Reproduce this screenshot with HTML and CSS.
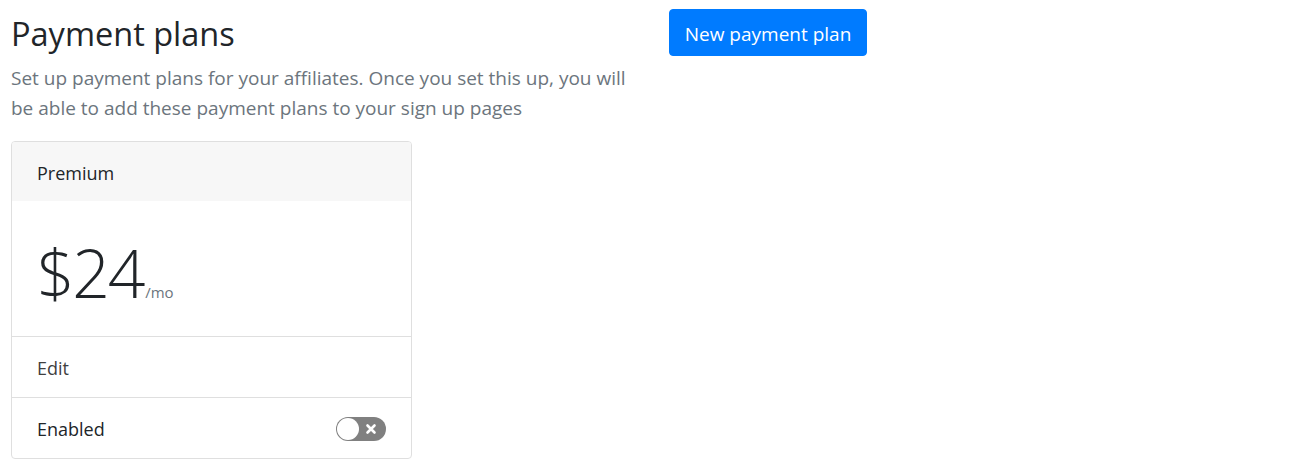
FILE: index.html
```html
<!DOCTYPE html>
<html>
<head>
<meta charset="utf-8">
<link rel="stylesheet" href="styles.css">
</head>
<body>
<div class="page">
  <div class="intro">
    <h1 class="title">Payment plans</h1>
    <p class="lead">Set up payment plans for your affiliates. Once you set this up, you will be able to add these payment plans to your sign up pages</p>
  </div>
  <div class="actions">
    <button class="btn-primary">New payment plan</button>
  </div>
</div>
<div class="card">
  <div class="card-header">Premium</div>
  <div class="card-body">
    <span class="price">$24</span><span class="per">/mo</span>
  </div>
  <div class="card-row">Edit</div>
  <div class="card-row row-toggle">
    <span>Enabled</span>
    <span class="toggle">
      <span class="knob"></span>
      <svg class="x" width="12" height="12" viewBox="0 0 12 12"><path d="M2.5 2.5 L9.5 9.5 M9.5 2.5 L2.5 9.5" stroke="#fff" stroke-width="2.6" stroke-linecap="round"/></svg>
    </span>
  </div>
</div>
</body>
</html>
```

FILE: styles.css
```css
* { box-sizing: border-box; }
body {
  margin: 0;
  font-family: "Open Sans", "Noto Sans", sans-serif;
  color: #212529;
  background: #fff;
}
.page {
  display: flex;
  align-items: flex-start;
  padding: 0 0 0 11px;
}
.intro { width: 639px; padding-top: 14px; }
.title {
  margin: 0;
  font-size: 32.5px;
  font-weight: 400;
  line-height: 40px;
}
.lead {
  margin: 9px 0 0;
  font-size: 19px;
  line-height: 30px;
  color: #6c757d;
  width: 632px;
}
.actions { padding-top: 9px; padding-left: 19px; }
.btn-primary {
  background: #007bff;
  color: #fff;
  border: 1px solid #007bff;
  border-radius: 4px;
  font-family: inherit;
  font-size: 19px;
  line-height: 27px;
  padding: 11px 10px 7px;
  width: 198px;
  height: 47px;
}
.card {
  margin: 18px 0 0 11px;
  width: 401px;
  border: 1px solid #dfdfdf;
  border-radius: 4px;
  overflow: hidden;
}
.card-header {
  background: #f7f7f7;
  height: 59px;
  padding: 2px 25px 0;
  display: flex;
  align-items: center;
  font-size: 18px;
}
.card-body {
  height: 135px;
  padding: 0 25px;
  display: flex;
  align-items: baseline;
  padding-top: 38px;
}
.price {
  font-size: 66px;
  font-weight: 300;
  line-height: 1;
  letter-spacing: -2.3px;
}
.per {
  font-size: 15px;
  color: #6c757d;
  margin-left: 2px;
}
.card-row {
  border-top: 1px solid #dfdfdf;
  height: 61px;
  padding: 2px 25px 0;
  display: flex;
  align-items: center;
  font-size: 18px;
  color: #3f3f3f;
}
.row-toggle { justify-content: space-between; color: #212529; }
.toggle {
  position: relative;
  width: 50px;
  height: 24px;
  border-radius: 12px;
  background: #808080;
  display: inline-block;
}
.knob {
  position: absolute;
  left: 1px;
  top: 1px;
  width: 22px;
  height: 22px;
  border-radius: 50%;
  background: #fff;
}
.x { position: absolute; right: 9px; top: 6px; }
```
